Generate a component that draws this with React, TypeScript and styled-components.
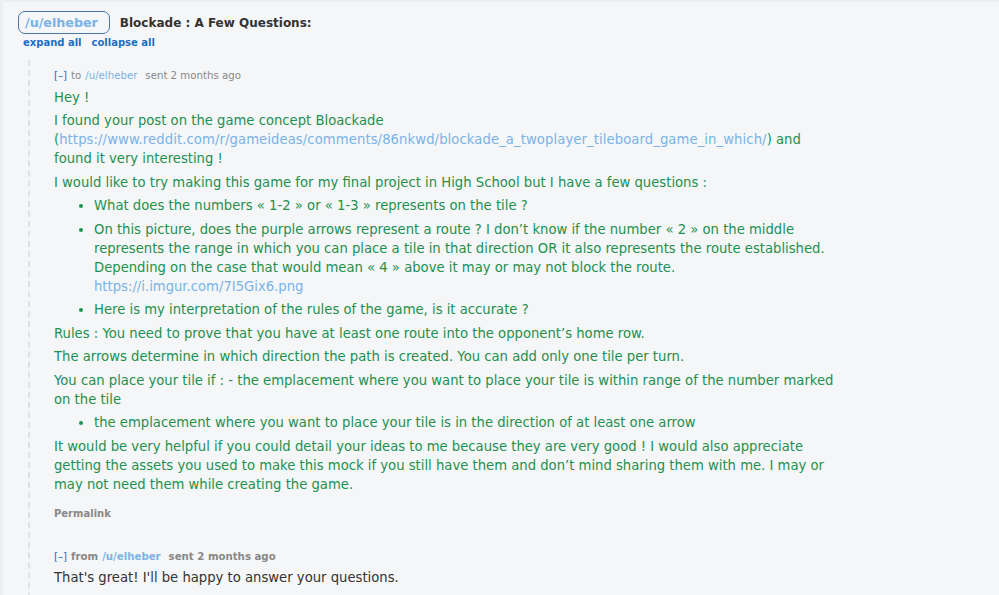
import React from "react";
import styled, { createGlobalStyle } from "styled-components";

const Global = createGlobalStyle`
  html, body { margin: 0; padding: 0; background: #f5f6f8; }
  body { font-family: "DejaVu Sans", Verdana, sans-serif; }
`;

const Page = styled.div`
  background: #f5f6f8;
  border-left: 3px solid #eceef1;
  border-top: 2px solid #eceef1;
  box-sizing: border-box;
  padding: 9px 0 0 15px;
  overflow: hidden;
  height: 595px;
`;

const TitleRow = styled.div`
  display: flex;
  align-items: center;
  gap: 10px;
`;

const UserPill = styled.a`
  display: inline-block;
  border: 1px solid #4a77a3;
  border-radius: 7px;
  padding: 2px 11px 2px 6px;
  color: #7ab3e6;
  font-weight: bold;
  font-size: 12.7px;
  line-height: 17px;
  text-decoration: none;
`;

const Title = styled.h1`
  margin: 0;
  font-size: 12px;
  font-weight: bold;
  color: #333;
`;

const Toggles = styled.div`
  display: flex;
  gap: 10px;
  margin: 3px 0 0 5px;
`;

const ToggleLink = styled.a`
  color: #1a6fc4;
  font-weight: bold;
  font-size: 10px;
  text-decoration: none;
`;

const Thread = styled.div`
  margin: 12px 0 0 10px;
  border-left: 2px dashed #dfe1e4;
  padding: 9px 0 0 24px;
  min-height: 600px;
`;

const Message = styled.div`
  margin-bottom: 31px;
`;

const Header = styled.div<{ $bold?: boolean }>`
  font-size: 10.2px;
  line-height: 14px;
  color: #888;
  font-weight: ${(p) => (p.$bold ? "bold" : "normal")};
  display: flex;
  gap: 4px;
`;

const Collapse = styled.span`
  color: #1a6fc4;
  font-weight: normal;
`;

const UserLink = styled.span`
  color: #7ab3e6;
  margin-right: 4px;
`;

const Body = styled.div<{ $tone: string }>`
  color: ${(p) => p.$tone};
  font-size: 13.2px;
  line-height: 19px;
  margin-top: 4px;
  max-width: 780px;
  p { margin: 4.5px 0; }
  ul { margin: 4.5px 0; padding-left: 40px; }
  li { margin: 4.5px 0; }
`;

const Link = styled.a<{ $wide?: boolean }>`
  color: #7ab3e6;
  text-decoration: none;
  letter-spacing: ${(p) => (p.$wide ? "0.09px" : "0")};
`;

const Permalink = styled.a`
  display: block;
  color: #888;
  font-weight: bold;
  font-size: 10px;
  margin-top: 14px;
  text-decoration: none;
`;

export default function App() {
  return (
    <>
      <Global />
      <Page>
        <TitleRow>
          <UserPill>/u/elheber</UserPill>
          <Title>Blockade : A Few Questions:</Title>
        </TitleRow>
        <Toggles>
          <ToggleLink>expand all</ToggleLink>
          <ToggleLink>collapse all</ToggleLink>
        </Toggles>
        <Thread>
          <Message>
            <Header>
              <Collapse>[–]</Collapse>
              <span>to</span>
              <UserLink>/u/elheber</UserLink>
              <span>sent 2 months ago</span>
            </Header>
            <Body $tone="#23904f">
              <p>Hey !</p>
              <p>
                I found your post on the game concept Bloackade (
                <Link $wide>https://www.reddit.com/r/gameideas/comments/86nkwd/blockade_a_twoplayer_tileboard_game_in_which/</Link>) and
                found it very interesting !
              </p>
              <p>I would like to try making this game for my final project in High School but I have a few questions :</p>
              <ul>
                <li>What does the numbers « 1-2 » or « 1-3 » represents on the tile ?</li>
                <li>
                  On this picture, does the purple arrows represent a route ? I don’t know if the number « 2 » on the middle
                  represents the range in which you can place a tile in that direction OR it also represents the route
                  established. Depending on the case that would mean « 4 » above it may or may not block the route.{" "}
                  <Link>https://i.imgur.com/7I5Gix6.png</Link>
                </li>
                <li>Here is my interpretation of the rules of the game, is it accurate ?</li>
              </ul>
              <p>Rules : You need to prove that you have at least one route into the opponent’s home row.</p>
              <p>The arrows determine in which direction the path is created. You can add only one tile per turn.</p>
              <p>
                You can place your tile if : - the emplacement where you want to place your tile is within range of the
                number marked on the tile
              </p>
              <ul>
                <li>the emplacement where you want to place your tile is in the direction of at least one arrow</li>
              </ul>
              <p>
                It would be very helpful if you could detail your ideas to me because they are very good ! I would also
                appreciate getting the assets you used to make this mock if you still have them and don’t mind sharing
                them with me. I may or may not need them while creating the game.
              </p>
            </Body>
            <Permalink>Permalink</Permalink>
          </Message>
          <Message>
            <Header $bold>
              <Collapse>[–]</Collapse>
              <span>from</span>
              <UserLink>/u/elheber</UserLink>
              <span>sent 2 months ago</span>
            </Header>
            <Body $tone="#333">
              <p>That's great! I'll be happy to answer your questions.</p>
            </Body>
          </Message>
        </Thread>
      </Page>
    </>
  );
}
